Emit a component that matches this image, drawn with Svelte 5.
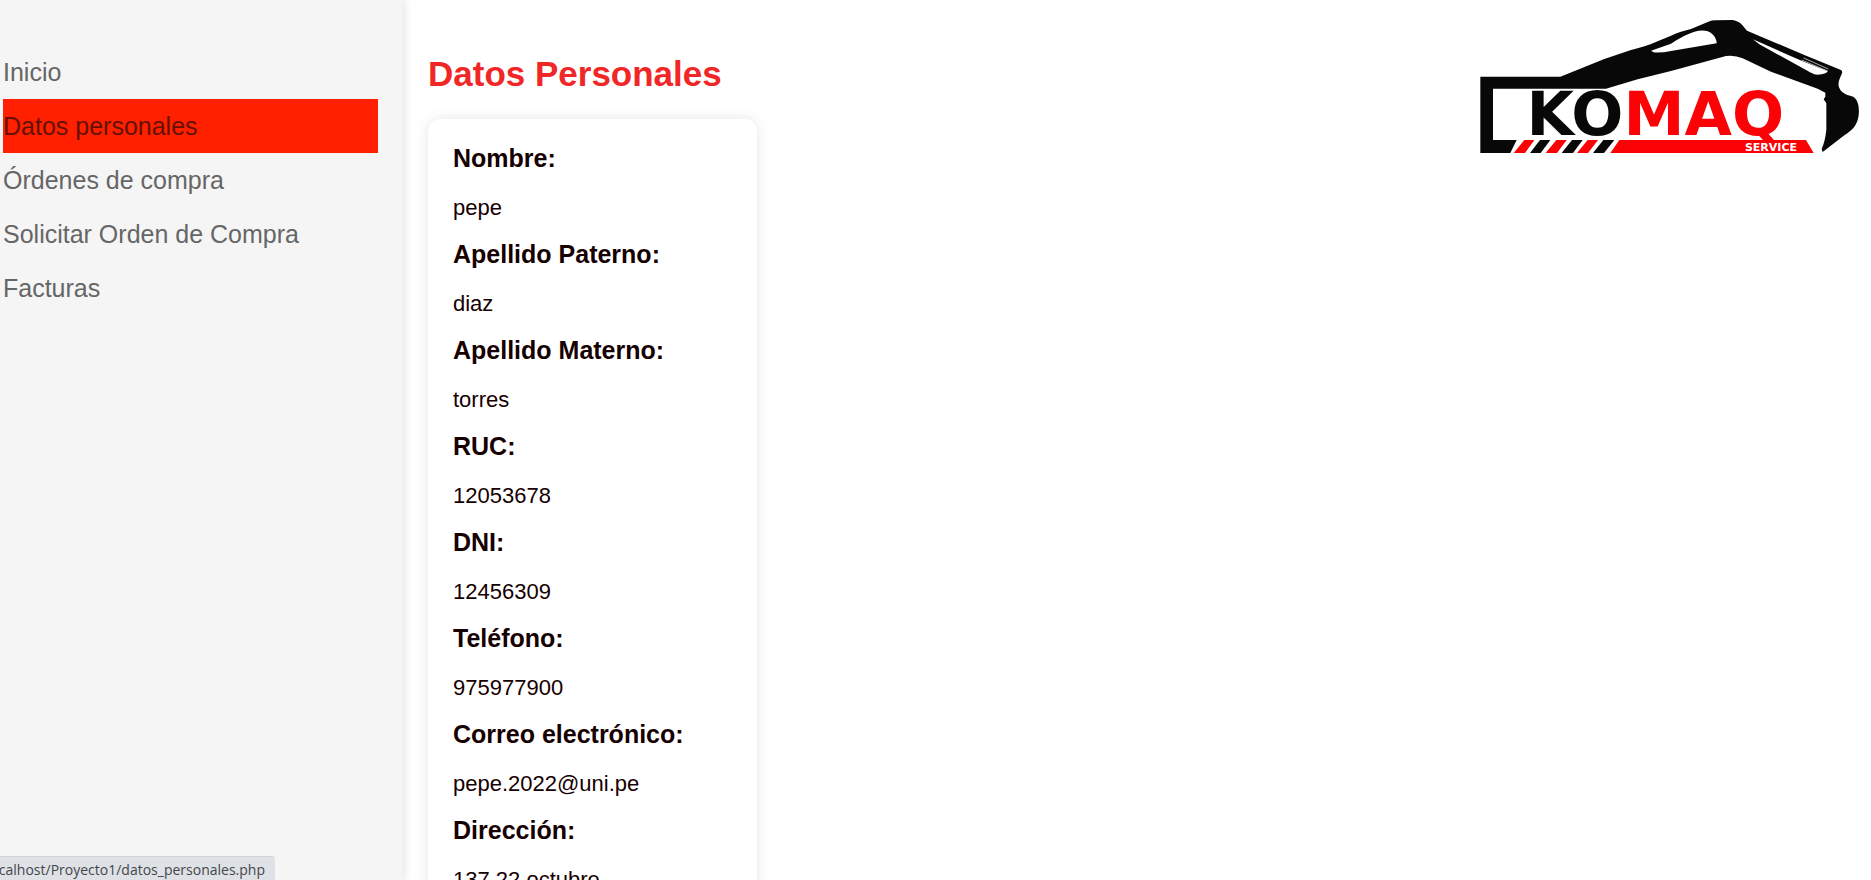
<script>
  const links = [
    { label: 'Inicio', href: '#inicio' },
    { label: 'Datos personales', href: '#datos', active: true },
    { label: 'Órdenes de compra', href: '#ordenes' },
    { label: 'Solicitar Orden de Compra', href: '#solicitar' },
    { label: 'Facturas', href: '#facturas' }
  ];

  const fields = [
    ['Nombre:', 'pepe'],
    ['Apellido Paterno:', 'diaz'],
    ['Apellido Materno:', 'torres'],
    ['RUC:', '12053678'],
    ['DNI:', '12456309'],
    ['Teléfono:', '975977900'],
    ['Correo electrónico:', 'pepe.2022@uni.pe'],
    ['Dirección:', '137 22 octubre']
  ];

  // Hazard stripes under the wordmark
  const stripes = [
    { points: '160,420 190,420 162,459 128,459', color: '#fb0207' },
    { points: '207,420 238,420 209,459 177,459', color: '#080808' },
    { points: '256,420 287,420 258,459 224,459', color: '#fb0207' },
    { points: '303,420 335,420 306,459 272,459', color: '#080808' },
    { points: '350,420 381,420 351,459 318,459', color: '#fb0207' },
    { points: '397,420 430,420 399,459 366,459', color: '#080808' }
  ];
</script>

<div class="page">
  <nav class="sidebar">
    <ul>
      {#each links as link}
        <li><a href={link.href} class:active={link.active}>{link.label}</a></li>
      {/each}
    </ul>
  </nav>

  <main>
    <section>
      <h1>Datos Personales</h1>
      <dl class="card">
        {#each fields as [label, value]}
          <dt>{label}</dt>
          <dd>{value}</dd>
        {/each}
      </dl>
    </section>

    <svg class="logo" viewBox="0 0 1200 480" role="img" aria-label="Komaq Service">
      <path
        fill="#080808"
        fill-rule="evenodd"
        d="M28 230H268L400 177L480 150Q530 138 560 124L600 107Q625 95 660 87L712 65Q722 61 735 61L785 60Q803 63 813 74L828 92L1000 165L1110 210Q1115 213 1113 220L1106 236Q1100 250 1104 262Q1110 278 1127 284L1147 290Q1158 297 1162 315Q1168 350 1153 376Q1145 390 1120 406L1055 456L1052 447Q1062 425 1066 390V310L1058 298L1063 290V278L1040 266L900 215L815 175Q792 165 765 168L600 213L500 238L405 266H66V420H137L118 459H28Z
        M540 152L600 131Q640 104 670 95Q705 86 723 101Q737 114 737 130L600 153Q570 159 548 157Z
        M846 118L995 184L1070 214Q1067 223 1040 224Q1030 224 1020 218L865 133Z"
      />
      <path d="M998 174L1072 207M992 180L1070 213" stroke="#fff" stroke-width="2" fill="none" />
      {#each stripes as stripe}
        <polygon points={stripe.points} fill={stripe.color} />
      {/each}
      <polygon points="445,420 1005,420 1028,459 418,459" fill="#fb0207" />
      <text class="mark" x="553" y="406"><tspan class="dark">KO</tspan><tspan class="red">MAQ</tspan></text>
      <text class="tagline" x="978" y="452" text-anchor="end">SERVICE</text>
    </svg>
  </main>

  <div class="status">calhost/Proyecto1/datos_personales.php</div>
</div>

<style>
  :global(body) {
    margin: 0;
    background: #fff;
  }

  .page {
    display: flex;
    height: 100vh;
    overflow: hidden;
    font-family: 'Liberation Sans', Arial, sans-serif;
  }

  .sidebar {
    box-sizing: border-box;
    flex: 0 0 403px;
    padding: 45px 25px 0 3px;
    background: #f5f5f5;
    box-shadow: 0 0 10px rgba(0, 0, 0, 0.15);
  }

  ul {
    margin: 0;
    padding: 0;
    list-style: none;
  }

  .sidebar a {
    display: block;
    font-size: 25px;
    line-height: 54px;
    color: #666;
    text-decoration: none;
  }

  .sidebar a.active {
    background: #ff2000;
    color: #661000;
  }

  main {
    flex: 1;
    display: flex;
    justify-content: space-between;
    align-items: flex-start;
    padding-left: 25px;
  }

  h1 {
    margin: 54px 0 25px;
    font-size: 35px;
    line-height: 40px;
    color: #f12727;
  }

  .card {
    box-sizing: border-box;
    width: 329px;
    margin: 0;
    padding: 17px 25px 25px;
    border-radius: 12px;
    background: #fff;
    box-shadow: 0 0 13px rgba(0, 0, 0, 0.1);
    color: #160000;
  }

  dt {
    font-size: 25px;
    font-weight: bold;
    line-height: 44px;
  }

  dd {
    margin: 4px 0 0;
    font-size: 22px;
    line-height: 48px;
  }

  .logo {
    width: 400px;
    height: 160px;
    flex: none;
  }

  .mark {
    font-family: 'DejaVu Sans', sans-serif;
    font-size: 184px;
    font-weight: bold;
    text-anchor: middle;
  }

  .dark {
    fill: #080808;
  }

  .red {
    fill: #fb0207;
  }

  .tagline {
    font-family: 'DejaVu Sans', sans-serif;
    font-size: 33px;
    font-weight: bold;
    fill: #fff;
  }

  .status {
    position: fixed;
    left: 0;
    bottom: 0;
    box-sizing: border-box;
    width: 275px;
    height: 24px;
    padding: 2px 10px 0 0;
    display: flex;
    justify-content: flex-end;
    overflow: hidden;
    border-top: 1px solid #d0d3d8;
    border-top-right-radius: 4px;
    background: #dee1e6;
    color: #44474a;
    font-family: 'Open Sans', 'Noto Sans', sans-serif;
    font-size: 14px;
    line-height: 22px;
    white-space: nowrap;
  }
</style>
